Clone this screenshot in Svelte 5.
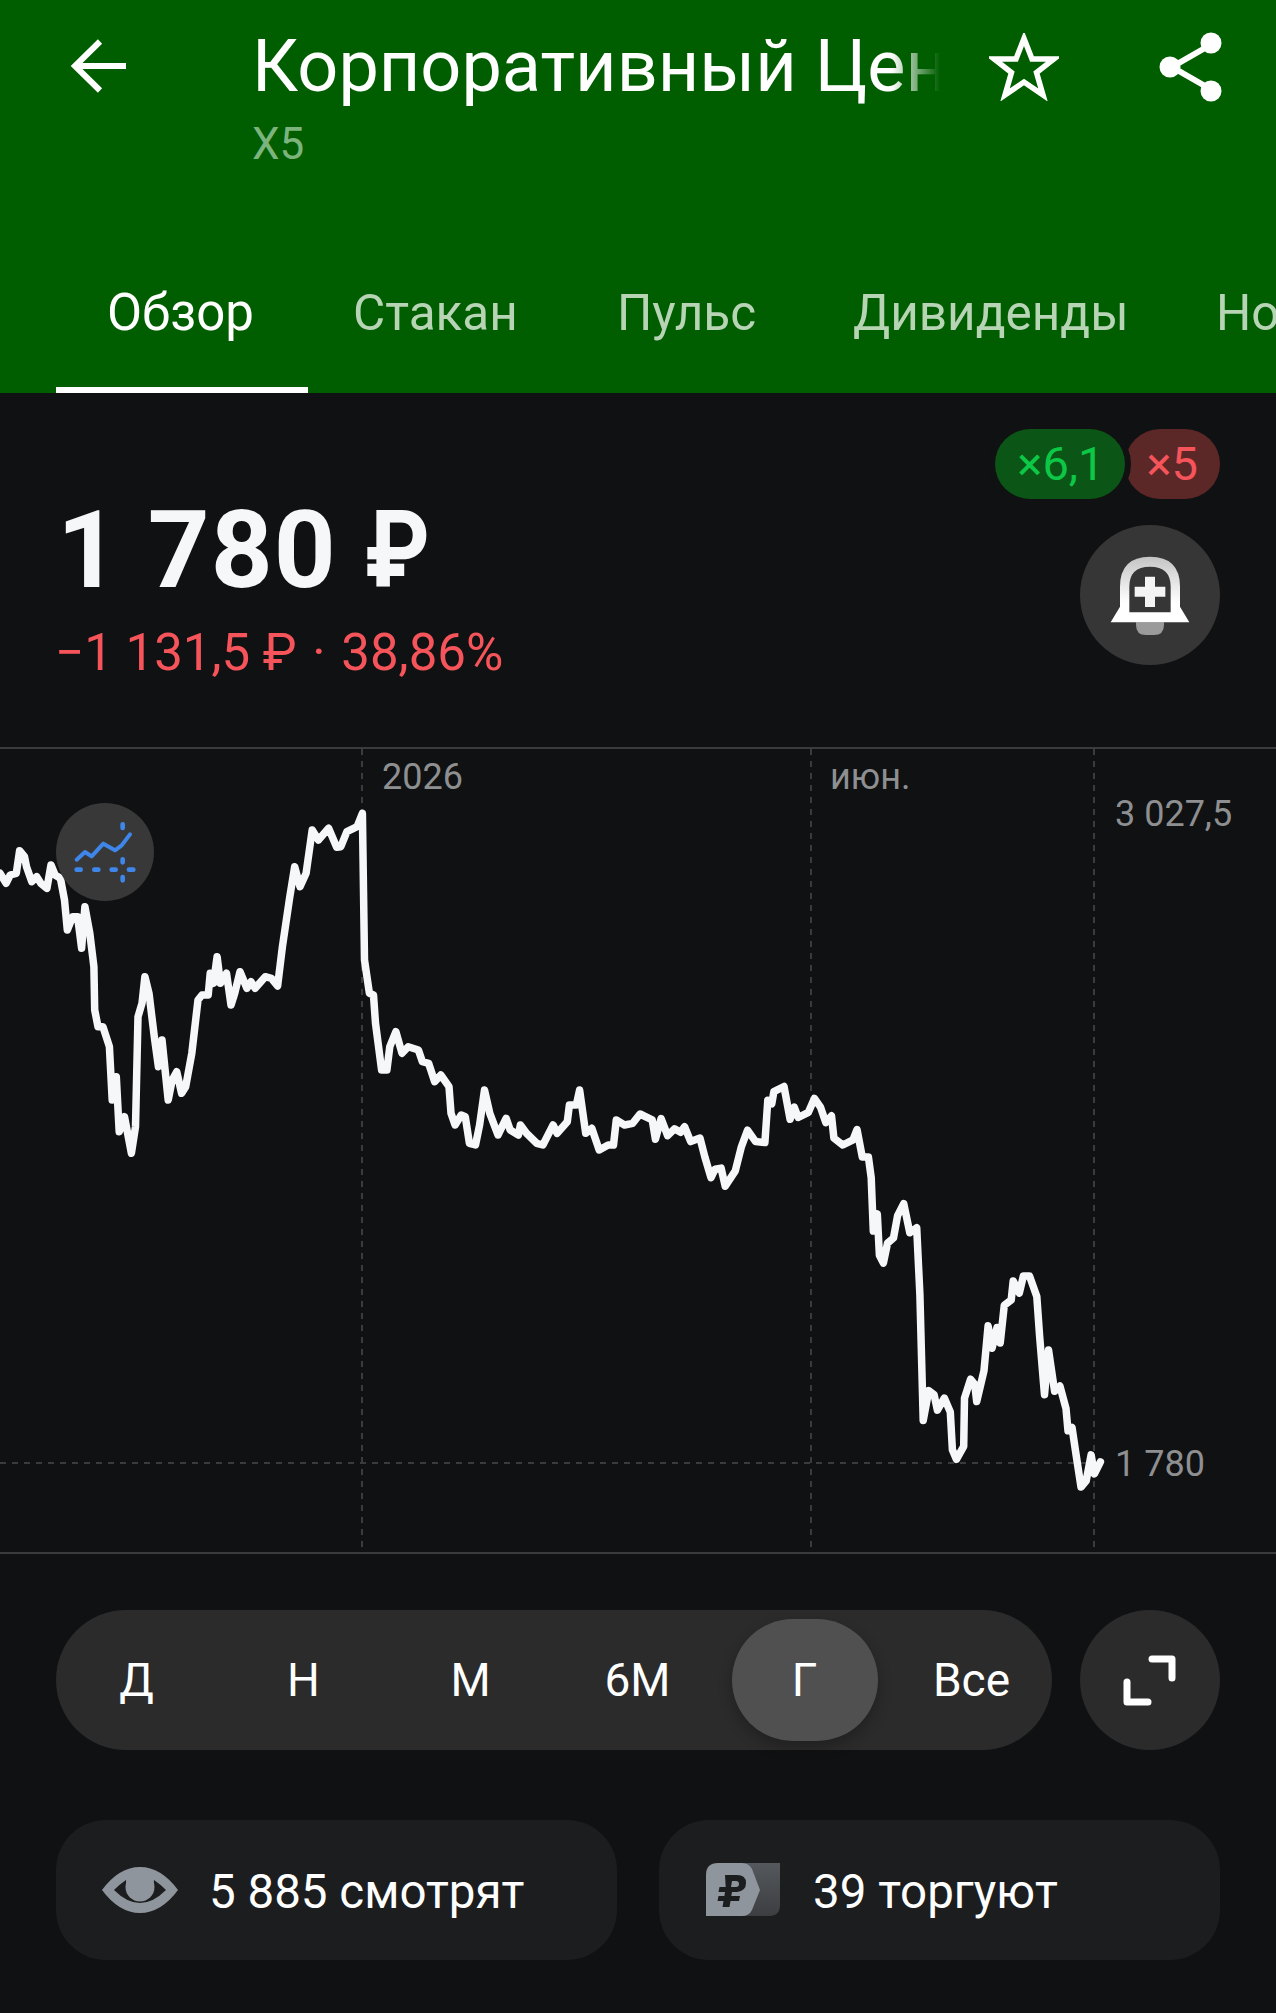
<script>
  const tabs = ['Обзор', 'Стакан', 'Пульс', 'Дивиденды', 'Новости']
  const ranges = ['Д', 'Н', 'М', '6М', 'Г', 'Все']
  let activeRange = $state('Г')

  // traced from the chart, in two pieces
  const left = [[0,340],[15,370],[25,345],[40,340],[48,272],[60,290],[65,320],[78,365],[90,350],[100,370],[115,385],[125,315],[135,345],[148,355],[158,420],[165,510],[178,470],[190,470],[200,565],[208,440],[220,520],[230,620],[232,750],[240,800],[252,800],[268,860],[275,1020],[285,950],[292,1115],[305,1070],[322,1180],[332,1100],[338,770],[348,730],[355,650],[365,700],[378,830],[388,920],[397,840],[412,1020],[422,960],[433,935],[445,1000],[455,980],[470,880],[485,720],[495,705],[510,705],[515,640],[523,670],[532,590],[540,670],[555,640],[566,735],[575,700],[588,635],[605,685],[615,665],[625,685],[650,650],[665,655],[680,678],[692,560],[710,410],[722,320],[735,380],[750,340],[765,210],[780,240],[805,205],[825,262],[835,260],[850,215],[875,200],[888,160],[893,600],[905,700],[915,705],[920,790],[935,930],[948,930],[955,860],[970,815],[985,880],[1000,860],[1025,870],[1035,905],[1050,910],[1065,965],[1080,945],[1100,980],[1105,1060],[1115,1095],[1130,1065],[1140,1070],[1150,1150],[1165,1155],[1175,1095],[1187,990],[1200,1060],[1220,1125],[1240,1075],[1250,1110],[1270,1125],[1275,1095],[1290,1120],[1315,1150],[1330,1155],[1355,1095],[1365,1120],[1390,1085],[1395,1035],[1412,1035],[1420,990],[1435,1120],[1450,1105],[1468,1170],[1490,1155],[1503,1155],[1510,1080],[1530,1095],[1550,1090]]
  const right = [[0,215],[30,232],[38,288],[52,228],[68,278],[85,258],[100,268],[110,252],[125,295],[148,285],[160,340],[175,400],[185,375],[200,372],[210,425],[235,380],[250,310],[265,262],[285,295],[308,298],[315,175],[325,185],[330,150],[355,135],[370,230],[380,195],[390,225],[415,210],[430,170],[445,195],[458,240],[472,220],[478,285],[500,305],[525,290],[535,260],[548,340],[563,340],[570,400],[575,555],[585,505],[590,625],[600,648],[610,590],[625,575],[635,510],[650,475],[665,560],[682,545],[690,740],[698,1105],[712,1018],[725,1030],[733,1075],[750,1040],[765,1080],[770,1190],[780,1218],[798,1180],[800,1040],[815,985],[825,1000],[830,1050],[848,960],[858,830],[868,895],[880,835],[888,880],[898,770],[915,755],[920,700],[935,735],[945,685],[960,685],[978,745],[985,860],[997,1030],[1007,900],[1022,1020],[1035,1005],[1050,1070],[1055,1135],[1065,1125],[1075,1205],[1087,1298],[1100,1280],[1112,1205],[1120,1260],[1135,1225]]

  const linePoints = [
    ...left.map(([x, y]) => [x / 2.45, 11 + y / 3]),
    ...right.map(([x, y]) => [640 + x / 2.465, 291 + y / 2.904])
  ].map(([x, y]) => `${x.toFixed(1)},${y.toFixed(1)}`).join(' ')
</script>

<div class="page">
  <header class="header">
    <div class="toolbar">
      <button class="back" aria-label="Назад">
        <svg viewBox="0 0 60 60" width="60" height="60"><path d="M58 30H7M32 5.500 7 30l25 24.500" fill="none" stroke="#fff" stroke-width="6"/></svg>
      </button>
      <div class="titles">
        <div class="title">Корпоративный Центр ИКС 5</div>
        <div class="ticker">X5</div>
      </div>
      <button class="star" aria-label="В избранное">
        <svg viewBox="0 0 70 68" width="70" height="68"><path d="M35 5.500 43 26H65L47.500 39.500 54 62 35 49 16 62 22.500 39.500 5 26H27Z" fill="none" stroke="#fff" stroke-width="5.500"/></svg>
      </button>
      <button class="share" aria-label="Поделиться">
        <svg viewBox="0 0 70 72" width="70" height="72"><path d="M55 13 15 36l40 23" fill="none" stroke="#fff" stroke-width="6"/><circle cx="54" cy="12" r="10.500" fill="#fff"/><circle cx="13" cy="36" r="10.500" fill="#fff"/><circle cx="54" cy="60" r="10.500" fill="#fff"/></svg>
      </button>
    </div>
    <nav class="tabs">
      {#each tabs as tab, i}
        <div class="tab" class:active={i === 0}>{tab}</div>
      {/each}
    </nav>
  </header>

  <section class="quote">
    <div class="prices">
      <div class="price">1 780 <span class="rub">₽</span></div>
      <div class="change">−1 131,5 ₽ <span class="sep">·</span> 38,86%</div>
    </div>
    <div class="quote-side">
      <div class="pills">
        <span class="pill green">×6,1</span>
        <span class="pill red">×5</span>
      </div>
      <button class="round bell" aria-label="Уведомление">
        <svg viewBox="360 345 420 420" width="140" height="140">
          <defs>
            <linearGradient id="bellFill" x1="0" y1="0" x2="0" y2="1">
              <stop offset="0" stop-color="#c4c4c4"/>
              <stop offset="0.7" stop-color="#fff"/>
            </linearGradient>
          </defs>
          <path d="M528 637H612V645Q612 675 582 675H558Q528 675 528 645Z" fill="#9b9b9b"/>
          <path fill-rule="evenodd" d="M452 637 480 590V530Q480 440 570 440 660 440 660 530V590L688 637ZM508 607H632V530Q632 470 570 470 508 470 508 530Z" fill="url(#bellFill)"/>
          <path d="M555 500H585V530H616V560H585V591H555V560H524V530H555Z" fill="#f4f4f4"/>
        </svg>
      </button>
    </div>
  </section>

  <section class="chart">
    <svg class="plot" viewBox="0 0 1276 803" width="1276" height="803">
      <g stroke="#3a3b3c" stroke-width="2" stroke-dasharray="6 6">
        <path d="M362 0V803M811 0V803M1094 0V803"/>
        <path d="M0 714H1094"/>
      </g>
      <polyline points={linePoints} fill="none" stroke="#f6f7f8" stroke-width="7.500" stroke-linejoin="round" stroke-linecap="round"/>
    </svg>
    <span class="axis year" style="left:382px">2026</span>
    <span class="axis year" style="left:830px">июн.</span>
    <span class="axis value high">3 027,5</span>
    <span class="axis value last">1 780</span>
    <button class="forecast" aria-label="Прогноз">
      <svg viewBox="48 68 294 294" width="98" height="98">
        <path d="M110 238 135 215 155 228 190 190 225 210 245 195 270 162" fill="none" stroke="#3f86ea" stroke-width="12" stroke-linecap="round" stroke-linejoin="round"/>
        <path d="M110 268H122M163 268H175M215 268H227M267 268H280M248 132V143M248 237V246M248 290V300" fill="none" stroke="#3f86ea" stroke-width="14" stroke-linecap="round"/>
      </svg>
    </button>
  </section>

  <section class="controls">
    <div class="ranges">
      {#each ranges as r}
        <button class="range" class:selected={r === activeRange} onclick={() => (activeRange = r)}>{r}</button>
      {/each}
    </div>
    <button class="round expand" aria-label="Развернуть">
      <svg viewBox="0 0 140 140" width="140" height="140">
        <path d="M72 49H92V68M47 72V92H68" fill="none" stroke="#fff" stroke-width="7" stroke-linecap="round" stroke-linejoin="round"/>
      </svg>
    </button>
  </section>

  <section class="stats">
    <div class="stat">
      <svg class="eye" viewBox="0 0 78 48" width="78" height="48">
        <path fill-rule="evenodd" d="M1 24Q18 1 39 1T77 24Q60 47 39 47T1 24ZM13 24Q26 37 39 37T65 24Q59 18 53 14A14 14 0 1 1 25 14Q19 18 13 24Z" fill="#8f959c"/>
        <circle cx="39" cy="21" r="14.500" fill="#8f959c"/>
      </svg>
      <span>5 885 смотрят</span>
    </div>
    <div class="stat trade">
      <svg class="ruble" viewBox="0 0 74 54" width="74" height="54">
        <defs>
          <linearGradient id="backFill" x1="0" y1="0" x2="0" y2="1">
            <stop offset="0" stop-color="#55585c"/>
            <stop offset="1" stop-color="#3c3e41"/>
          </linearGradient>
        </defs>
        <path d="M36 0H74V42Q74 53 63 53H36Z" fill="url(#backFill)"/>
        <path d="M12 0H36Q43 0 46 6L54 27 46 47Q43 53 36 53H0V12Q0 0 12 0Z" fill="#8f959c"/>
        <path fill-rule="evenodd" d="M19 12H31Q40 12 40 20T31 29H26L25.300 33H34L33 38H24.500L23.500 44H16.500L17.500 38H11.500L12.500 33H18.400L19 29H12.500L13.500 24H19.700ZM26 18 25 24H30Q33 24 33 21T30 18Z" fill="#1c1d1f"/>
      </svg>
      <span>39 торгуют</span>
    </div>
  </section>
</div>

<style>
  :global(body) {
    background: #101112;
  }

  .page {
    width: 1276px;
    height: 2013px;
    overflow: hidden;
    background: #101112;
    color: #fff;
    font-family: Roboto, "Noto Sans", sans-serif;
  }

  button {
    padding: 0;
    border: 0;
    background: none;
    color: inherit;
    font: inherit;
    display: flex;
    align-items: center;
    justify-content: center;
  }

  .header {
    height: 393px;
    background: #005e00;
    display: flex;
    flex-direction: column;
    justify-content: space-between;
  }

  .toolbar {
    display: flex;
    align-items: flex-start;
    padding: 22px 0 0 68px;
  }

  .back {
    width: 60px;
    height: 60px;
    margin-top: 14px;
  }

  .titles {
    width: 688px;
    margin-left: 124px;
  }

  .title {
    font-size: 72px;
    line-height: 90px;
    white-space: nowrap;
    overflow: hidden;
    -webkit-mask-image: linear-gradient(to right, #000 93%, transparent 100%);
    mask-image: linear-gradient(to right, #000 93%, transparent 100%);
  }

  .ticker {
    margin-top: 6px;
    font-size: 44px;
    line-height: 52px;
    color: #7db47d;
  }

  .star {
    width: 70px;
    height: 68px;
    margin: 11px 0 0 49px;
  }

  .share {
    width: 70px;
    height: 72px;
    margin: 9px 0 0 98px;
  }

  .tabs {
    display: grid;
    grid-template-columns: 246px 264px 236px 363px 200px;
    padding-left: 107px;
    white-space: nowrap;
    overflow: hidden;
  }

  .tab {
    position: relative;
    height: 112px;
    padding-top: 2px;
    box-sizing: border-box;
    font-size: 49.500px;
    line-height: 60px;
    color: #b7d4b5;
  }

  .tab.active {
    color: #fff;
    font-size: 51px;
  }

  .tab.active::after {
    content: '';
    position: absolute;
    left: -51px;
    bottom: 0;
    width: 252px;
    height: 6px;
    background: #fff;
  }

  .quote {
    height: 356px;
    box-sizing: border-box;
    padding: 36px 56px 0 57px;
    display: flex;
    justify-content: space-between;
    border-bottom: 2px solid #3a3b3c;
  }

  .prices {
    padding-top: 58px;
    margin-left: -2px;
  }

  .price {
    font-size: 108px;
    line-height: 126px;
    font-weight: 700;
    letter-spacing: 1px;
    color: #f6f7f8;
    padding-left: 2px;
  }

  .rub {
    display: inline-block;
    transform: scaleX(0.85);
    transform-origin: left;
  }

  .change {
    margin-top: 10px;
    font-size: 51px;
    line-height: 60px;
    color: #f5545a;
  }

  .sep {
    margin: 0 3px;
  }

  .quote-side {
    display: flex;
    flex-direction: column;
    align-items: flex-end;
    gap: 26px;
  }

  .pills {
    display: flex;
  }

  .pill {
    height: 70px;
    border-radius: 35px;
    box-sizing: border-box;
    font-size: 47px;
    line-height: 70px;
  }

  .pill.green {
    position: relative;
    z-index: 1;
    padding: 0 20px 0 22px;
    background: #0b5516;
    color: #0dc846;
    box-shadow: 0 0 0 6px #101112;
  }

  .pill.red {
    padding: 0 22px;
    background: #5c2727;
    color: #f5545a;
  }

  .round {
    width: 140px;
    height: 140px;
    border-radius: 50%;
    flex: none;
  }

  .bell {
    background: #363636;
  }

  .chart {
    position: relative;
    height: 803px;
    border-bottom: 2px solid #3a3b3c;
  }

  .plot {
    display: block;
  }

  .axis {
    position: absolute;
    font-size: 36px;
    line-height: 40px;
    color: #8e8f91;
  }

  .year {
    top: 8px;
  }

  .value {
    left: 1115px;
  }

  .high {
    top: 45px;
  }

  .last {
    top: 695px;
  }

  .forecast {
    position: absolute;
    left: 56px;
    top: 54px;
    width: 98px;
    height: 98px;
    border-radius: 50%;
    background: #383838;
  }

  .controls {
    display: flex;
    justify-content: space-between;
    padding: 56px 56px 0 56px;
  }

  .ranges {
    width: 996px;
    height: 140px;
    box-sizing: border-box;
    border-radius: 70px;
    background: #2b2b2c;
    display: grid;
    grid-template-columns: repeat(6, 167px);
    justify-content: center;
    align-items: center;
    justify-items: center;
  }

  .range {
    width: 146px;
    height: 122px;
    border-radius: 61px;
    font-size: 46px;
  }

  .range.selected {
    background: #505050;
    box-shadow: 0 6px 14px rgba(0, 0, 0, 0.25);
  }

  .expand {
    background: #2b2b2c;
  }

  .stats {
    display: grid;
    grid-template-columns: 561px 561px;
    justify-content: space-between;
    padding: 70px 56px 0 56px;
  }

  .stat {
    height: 140px;
    border-radius: 50px;
    background: #1c1d1f;
    display: flex;
    align-items: center;
    gap: 33px;
    padding-left: 45px;
    font-size: 47.500px;
    white-space: nowrap;
  }

  .stat span {
    position: relative;
    top: 2px;
  }

  .stat:first-child {
    gap: 30px;
  }

  .stat.trade {
    padding-left: 47px;
  }

  .eye, .ruble {
    flex: none;
  }
</style>
